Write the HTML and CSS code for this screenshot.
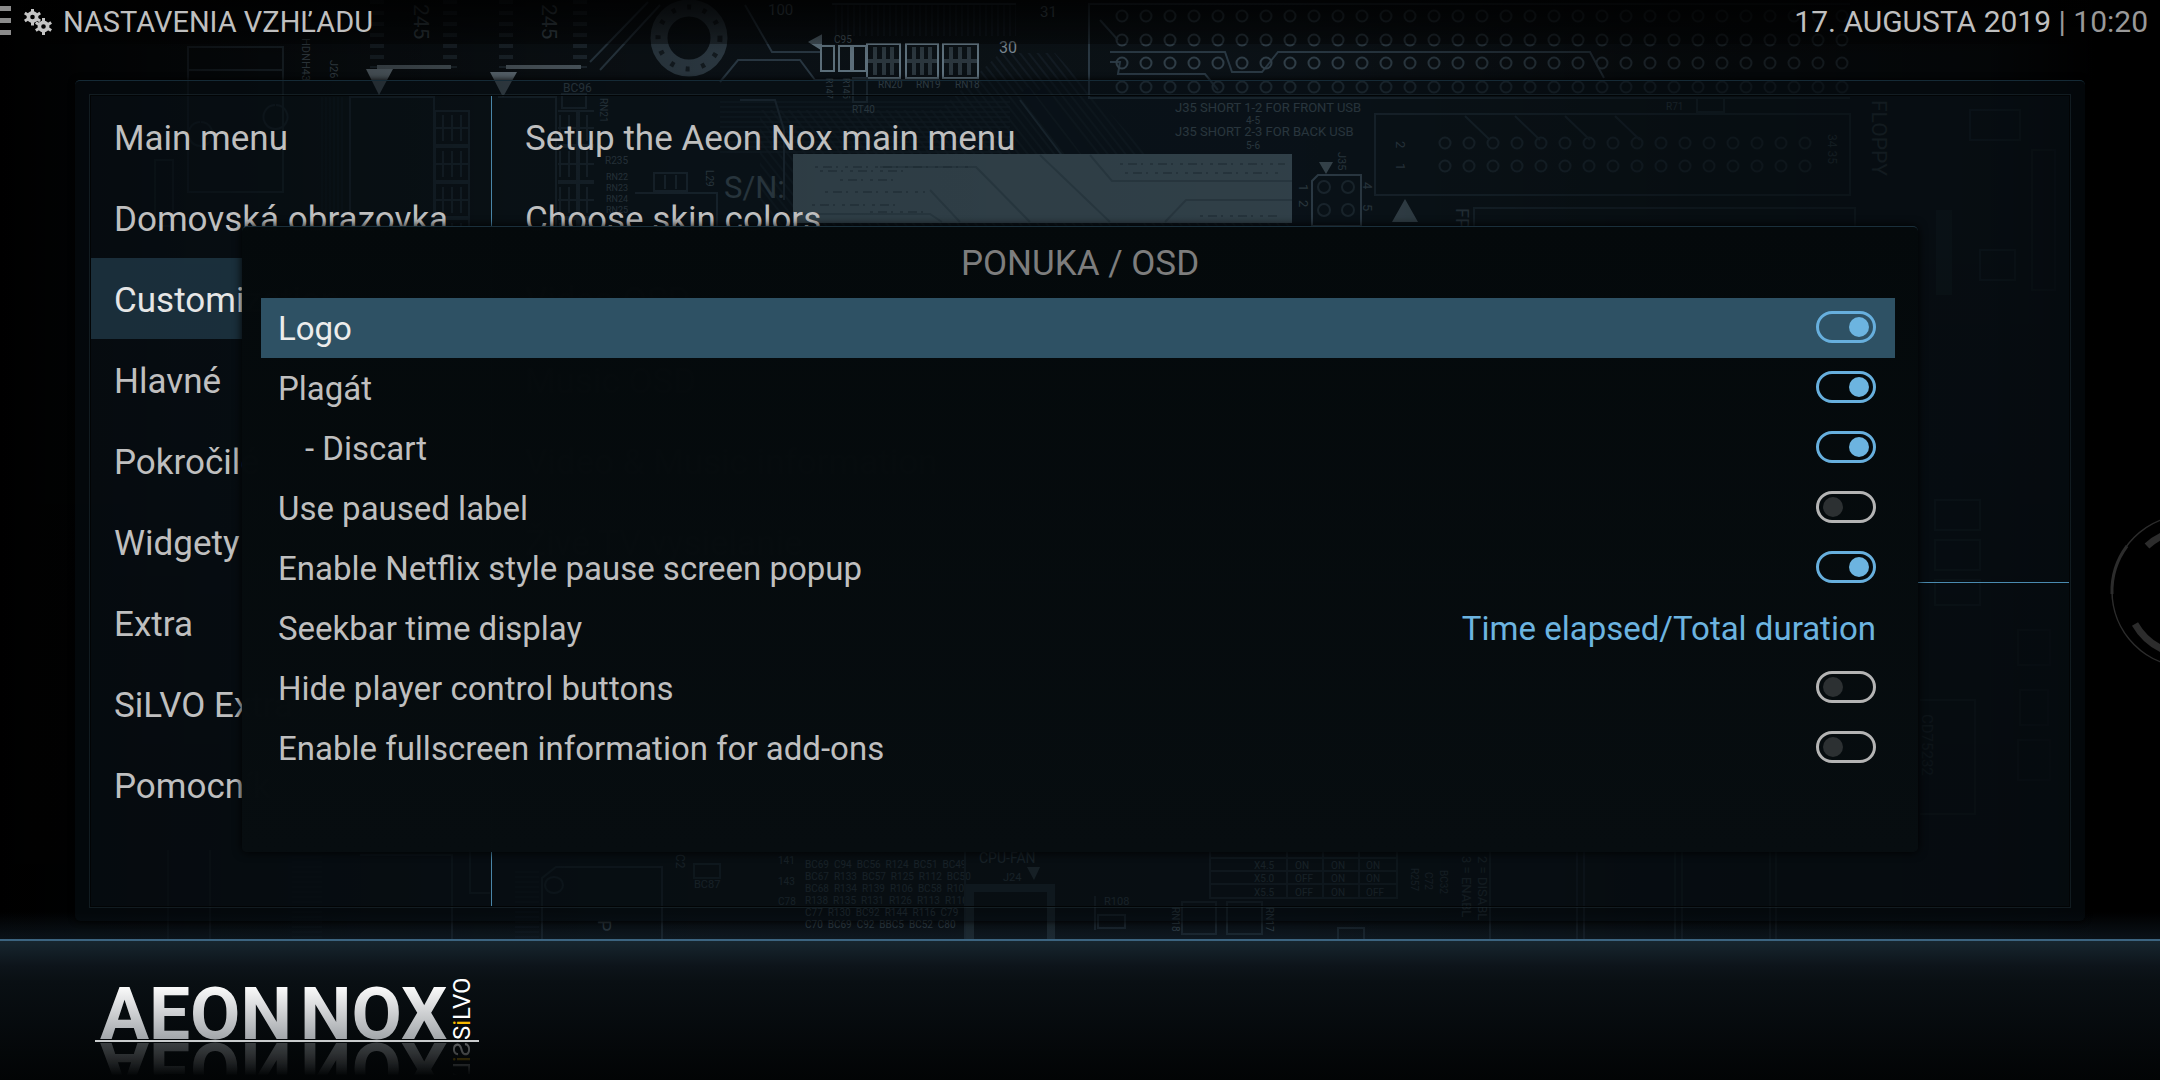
FILE: index.html
```html
<!DOCTYPE html>
<html lang="sk">
<head>
    <meta charset="UTF-8">
    <meta name="viewport" content="width=device-width, initial-scale=1.0">
    <title>Nastavenia vzhľadu</title>
    <link rel="stylesheet" href="styles.css">
</head>
<body>
    <!-- circuit board wallpaper -->
    <svg class="wallpaper" viewBox="0 0 2160 1080" preserveAspectRatio="xMidYMid slice" aria-hidden="true">
        <defs>
            <pattern id="holes" x="1110" y="4" width="24" height="47" patternUnits="userSpaceOnUse">
                <circle cx="12" cy="12" r="5.5" class="hole"/>
                <circle cx="12" cy="36" r="5.5" class="hole"/>
            </pattern>
            <pattern id="holes2" x="1433" y="131" width="24" height="23" patternUnits="userSpaceOnUse">
                <circle cx="12" cy="12" r="5.5" class="hole"/>
            </pattern>
            <pattern id="comb" width="6" height="10" patternUnits="userSpaceOnUse">
                <path d="M2 0V10" class="trace"/>
            </pattern>
            <pattern id="diag" width="7" height="7" patternUnits="userSpaceOnUse" patternTransform="rotate(-38)">
                <path d="M1 0V7" class="trace"/>
            </pattern>
            <pattern id="rows" width="8" height="5" patternUnits="userSpaceOnUse">
                <path d="M0 2H8" class="trace"/>
            </pattern>
            <pattern id="chip" width="36" height="36" patternUnits="userSpaceOnUse" x="434" y="110">
                <path d="M1 1H35V35H1ZM1 18H35M9 5V31M18 5V31M27 5V31" class="line"/>
            </pattern>
            <linearGradient id="shade-x">
                <stop offset="0" stop-color="#000" stop-opacity="1"/>
                <stop offset="0.04" stop-color="#000" stop-opacity="0.85"/>
                <stop offset="0.17" stop-color="#000" stop-opacity="0.45"/>
                <stop offset="0.33" stop-color="#000" stop-opacity="0.1"/>
                <stop offset="0.6" stop-color="#000" stop-opacity="0.05"/>
                <stop offset="0.78" stop-color="#000" stop-opacity="0.55"/>
                <stop offset="0.92" stop-color="#000" stop-opacity="0.7"/>
                <stop offset="0.97" stop-color="#000" stop-opacity="1"/>
            </linearGradient>
            <linearGradient id="shade-y" x2="0" y2="1">
                <stop offset="0" stop-color="#000" stop-opacity="0.4"/>
                <stop offset="0.05" stop-color="#000" stop-opacity="0.05"/>
                <stop offset="0.2" stop-color="#000" stop-opacity="0.05"/>
                <stop offset="0.8" stop-color="#000" stop-opacity="0.5"/>
            </linearGradient>
        </defs>
        <rect width="2160" height="1080" fill="#0c1318"/>
        <!-- copper traces -->
        <rect x="832" y="4" width="184" height="32" fill="url(#comb)"/>
        <path d="M832 4H1016" class="line"/>
        <path d="M940 110L1000 53H1055L1180 190H1292V226H760V110Z" fill="url(#diag)"/>
        <rect x="720" y="100" width="290" height="54" fill="url(#rows)"/>
        <path d="M1025 90L1125 226M1040 90L1140 226" stroke="#0a1019" stroke-width="9" fill="none"/>
        <path d="M720 82L738 60H800L815 80H940M745 5L772 52H820M1100 20L1118 40M1110 62H1120L1118 74H1205L1218 90M1110 52H1225L1232 72H1262L1278 52H1590L1604 78M1020 100L1085 186M600 70L660 5M590 62L648 2M740 100H775L784 130V200" class="line"/>
        <!-- chips top left -->
        <g class="board-text">
            <text transform="translate(414 4) rotate(90)" font-size="21">245</text>
            <text transform="translate(542 4) rotate(90)" font-size="21">245</text>
            <text transform="translate(302 38) rotate(90)" font-size="11">HDNH43</text>
            <text transform="translate(330 60) rotate(90)" font-size="11">J26</text>
            <text x="563" y="92" font-size="12">BC96</text>
            <text x="605" y="164" font-size="10">R235</text>
            <text x="606" y="180" font-size="9">RN22</text>
            <text x="606" y="191" font-size="9">RN23</text>
            <text x="606" y="202" font-size="9">RN24</text>
            <text x="606" y="213" font-size="9">RN25</text>
            <text transform="translate(600 98) rotate(90)" font-size="10">RN21</text>
            <text transform="translate(706 170) rotate(90)" font-size="10">L29</text>
            <text x="768" y="15" font-size="15">100</text>
            <text x="1040" y="17" font-size="15">31</text>
            <text x="834" y="43" font-size="10">C95</text>
            <text x="878" y="88" font-size="10">RN20</text>
            <text x="916" y="88" font-size="10">RN19</text>
            <text x="955" y="88" font-size="10">RN18</text>
            <text x="852" y="113" font-size="10">RT40</text>
            <text transform="translate(826 78) rotate(90)" font-size="9">R147</text>
            <text transform="translate(843 78) rotate(90)" font-size="9">R145</text>
            <text x="724" y="198" font-size="31">S/N:</text>
            <text x="1175" y="112" font-size="13">J35 SHORT 1-2 FOR FRONT USB</text>
            <text x="1246" y="124" font-size="10">4-5</text>
            <text x="1175" y="136" font-size="13">J35 SHORT 2-3 FOR BACK USB</text>
            <text x="1246" y="149" font-size="10">5-6</text>
            <text transform="translate(1338 152) rotate(90)" font-size="11">J35</text>
            <text transform="translate(1396 141) rotate(90)" font-size="13">2</text>
            <text transform="translate(1396 163) rotate(90)" font-size="13">1</text>
            <text transform="translate(1299 184) rotate(90)" font-size="13">1</text>
            <text transform="translate(1299 200) rotate(90)" font-size="13">2</text>
            <text transform="translate(1363 182) rotate(90)" font-size="13">4</text>
            <text transform="translate(1363 204) rotate(90)" font-size="13">5</text>
            <text transform="translate(1456 208) rotate(90)" font-size="18">FP</text>
            <text x="1666" y="110" font-size="10">R71</text>
            <text transform="translate(1828 134) rotate(90)" font-size="12">34 35</text>
            <text transform="translate(1872 100) rotate(90)" font-size="21">FLOPPY</text>
            <text transform="translate(1922 714) rotate(90)" font-size="15">CD75232</text>
        </g>
        <path d="M188 47H283V192H188ZM188 70H283M350 97H434V226H350ZM498 97H556V226" class="line"/>
        <path d="M322 97V226M326 97V226M330 97V226M334 97V226M338 97V226M342 97V226" class="trace"/>
        <path d="M377 0V68M450 0V68M506 0V68M580 0V68" class="pins"/>
        <path d="M377 67H451M506 67H581" stroke="#5e6c75" stroke-width="4"/>
        <path d="M366 69H393L379 95ZM490 72H517L503 97Z" fill="#7c8d98"/>
        <rect x="434" y="110" width="36" height="116" fill="url(#chip)"/>
        <rect x="558" y="110" width="36" height="116" fill="url(#chip)"/>
        <path d="M562 94H586V108H562ZM654 173H687V191H654ZM665 175V189M676 175V189M635 193H717V226" class="line"/>
        <path d="M155 160H173V226H155ZM200 122A12 12 0 1 0 201 122M275 105A12 12 0 1 0 276 105" class="line"/>
        <circle cx="689" cy="38" r="30" fill="none" stroke="#303e48" stroke-width="17"/>
        <circle cx="689" cy="38" r="31" fill="none" stroke="#151d23" stroke-width="5" stroke-dasharray="4 12"/>
        <!-- resistor packs -->
        <g class="bright">
            <path d="M867 44H900V78H867ZM906 44H938V78H906ZM943 44H978V78H943ZM821 46H834V71H821ZM839 46H851V71H839ZM853 46H866V71H853Z"/>
            <path d="M867 61H900M875 47V75M884 47V75M892 47V75M906 61H938M914 47V75M922 47V75M930 47V75M943 61H978M951 47V75M960 47V75M969 47V75" stroke-width="4" opacity="0.4"/>
            <path d="M810 42L821 36V49Z" fill="#6a7f8c"/>
            <text x="999" y="53" font-size="16">30</text>
        </g>
        <path d="M853 78H867V102H853Z" class="line"/>
        <!-- long connector -->
        <path d="M1850 4H1089V98H1850" class="line"/>
        <rect x="1110" y="4" width="740" height="94" fill="url(#holes)"/>
        <!-- serial number label -->
        <rect x="793" y="154" width="499" height="69" fill="#6f8894"/>
        <path d="M880 167H976L1030 222M930 190L960 222M1040 155L1110 222M1090 155L1112 181H1292M1165 222L1186 200H1292M793 214H930L942 222" stroke="#57707c" stroke-width="2" fill="none"/>
        <path d="M815 167H970M820 171H910M1120 164H1285M1125 173H1280M1200 216H1280M825 192H925M812 205H900M870 212H930M840 180H900" stroke="#3a4d57" stroke-dasharray="3 5 9 4 2 7"/>
        <path d="M1318 175H1361V226H1312V181Z" class="line bright-line"/>
        <circle cx="1324" cy="187" r="6" class="hole"/><circle cx="1348" cy="187" r="6" class="hole"/>
        <circle cx="1324" cy="210" r="6" class="hole"/><circle cx="1348" cy="210" r="6" class="hole"/>
        <path d="M1319 162H1333L1326 174ZM1405 199L1418 222H1392Z" fill="#7c909b"/>
        <path d="M1375 195V114H1850V195ZM1474 226V208H1855V226M1697 98H1724V112H1697Z" class="line"/>
        <rect x="1433" y="131" width="384" height="46" fill="url(#holes2)"/>
        <path d="M1465 116L1490 140M1515 116L1540 140M1565 116L1590 140M1615 116L1640 140" class="line"/>
        <!-- right side -->
        <path d="M1970 110H2020V140H1970ZM1980 250H2015V280H1980ZM2032 150H2055V290H2032ZM1935 500H1980V530H1935ZM1935 540H1980V570H1935ZM1935 580H1980V605H1935ZM2018 630H2050V665H2018ZM2020 690H2048V725H2020ZM2018 740H2050V780H2018ZM1920 700H1975V814H1920" class="line"/>
        <path d="M1944 210V295" stroke="#26323a" stroke-width="16"/>
        <!-- lower strip -->
        <g class="board-text">
            <text x="805" y="868" font-size="10">BC69&#160; C94&#160; BC56&#160; R124&#160; BC51&#160; BC49</text>
            <text x="805" y="880" font-size="10">BC67&#160; R133&#160; BC57&#160; R125&#160; R112&#160; BC50</text>
            <text x="805" y="892" font-size="10">BC68&#160; R134&#160; R139&#160; R106&#160; BC58&#160; R109</text>
            <text x="805" y="904" font-size="10">R138&#160; R135&#160; R131&#160; R126&#160; R113&#160; R110</text>
            <text x="805" y="916" font-size="10">C77&#160; R130&#160; BC92&#160; R144&#160; R116&#160; C79</text>
            <text x="805" y="928" font-size="10">C70&#160; BC69&#160; C92&#160; BBC5&#160; BC52&#160; C80</text>
            <text x="778" y="864" font-size="10">141</text>
            <text x="778" y="885" font-size="10">143</text>
            <text x="778" y="905" font-size="10">C78</text>
            <text x="979" y="863" font-size="14">CPU-FAN</text>
            <text x="1003" y="881" font-size="11">J24</text>
            <text x="1104" y="905" font-size="11">R108</text>
            <text x="1254" y="869" font-size="10">X4.5</text>
            <text x="1254" y="882" font-size="10">X5.0</text>
            <text x="1254" y="896" font-size="10">X5.5</text>
            <text x="1295" y="869" font-size="10">ON</text>
            <text x="1295" y="882" font-size="10">OFF</text>
            <text x="1295" y="896" font-size="10">OFF</text>
            <text x="1331" y="869" font-size="10">ON</text>
            <text x="1331" y="882" font-size="10">ON</text>
            <text x="1331" y="896" font-size="10">ON</text>
            <text x="1366" y="869" font-size="10">ON</text>
            <text x="1366" y="882" font-size="10">ON</text>
            <text x="1366" y="896" font-size="10">OFF</text>
            <text transform="translate(1411 868) rotate(90)" font-size="10">R257</text>
            <text transform="translate(1425 872) rotate(90)" font-size="10">C72</text>
            <text transform="translate(1440 870) rotate(90)" font-size="10">BC32</text>
            <text transform="translate(1478 856) rotate(90)" font-size="13">2 = DISABL</text>
            <text transform="translate(1462 856) rotate(90)" font-size="13">3 = ENABL</text>
            <text transform="translate(1172 907) rotate(90)" font-size="10">RN18</text>
            <text transform="translate(1266 907) rotate(90)" font-size="10">RN17</text>
            <text transform="translate(676 854) rotate(90)" font-size="12">C2</text>
            <text x="694" y="888" font-size="11">BC87</text>
            <text transform="translate(598 920) rotate(90)" font-size="18">P</text>
        </g>
        <path d="M970 939V888H1051V939" stroke="#33444e" stroke-width="8" fill="none"/>
        <path d="M1027 867H1040L1034 880Z" fill="#566a76"/>
        <path d="M1210 852V898H1397V852M1210 858H1397M1210 871H1397M1210 884H1397M1287 852V898M1323 852V898M1359 852V898M1182 902H1216V934H1182ZM1227 902H1262V934H1227ZM1095 896V930M1098 915H1125V928H1098ZM1338 939V928H1364V939M1490 852V939M1577 852V939M1584 852V939M1675 852V939M1682 852V939M1770 852V939M1776 852V939" class="line"/>
        <path d="M542 939V878L556 867H662V939M360 855H452V939M168 850V939M210 850V939M470 850V893H490M694 864H720V878H694ZM965 852V939" class="line"/>
        <ellipse cx="554" cy="885" rx="9" ry="8" class="line"/>
        <rect x="292" y="852" width="30" height="87" fill="url(#rows)"/>
        <rect x="515" y="868" width="24" height="71" fill="url(#rows)"/>
        <rect width="2160" height="1080" fill="url(#shade-x)"/>
        <rect width="2160" height="1080" fill="url(#shade-y)"/>
        <!-- loader ring at the edge -->
        <g fill="none" stroke="#2c2c2c">
            <circle cx="2188" cy="591" r="76" stroke-width="1.5"/>
            <path d="M2112 594A76 76 0 0 1 2127 546" stroke-width="3"/>
            <path d="M2147 546A60 60 0 0 1 2164 535M2135 624A62 62 0 0 0 2164 650" stroke-width="7"/>
        </g>
    </svg>

    <header class="topbar">
        <button type="button" class="menu-btn" aria-label="Menu"><span></span><span></span><span></span></button>
        <svg class="gears" viewBox="0 0 30 26" aria-hidden="true">
            <g fill="none" stroke="#c4c4c4">
                <circle cx="9.5" cy="8" r="4.1" stroke-width="3.6"/>
                <path d="M9.5 -0.5V3M9.5 13V16.5M1.8 4L5 6M14 10L17.2 12M17.2 4L14 6M5 10L1.8 12" stroke-width="3"/>
                <circle cx="20.5" cy="17.5" r="4.1" stroke-width="3.6"/>
                <path d="M20.5 9V12.500M20.5 22.500V26M12.800 13.500L16 15.500M25 19.500L28.200 21.500M28.200 13.500L25 15.500M16 19.500L12.800 21.500" stroke-width="3"/>
            </g>
        </svg>
        <h1 class="topbar-title">NASTAVENIA VZHĽADU</h1>
        <div class="topbar-date">17. AUGUSTA 2019 <span class="clock">| 10:20</span></div>
    </header>

    <main class="content">
        <div class="panel">
            <div class="panel-inner">
                <nav class="categories">
                    <a href="#">Main menu</a>
                    <a href="#">Domovská obrazovka</a>
                    <a href="#" class="active">Customization</a>
                    <a href="#">Hlavné</a>
                    <a href="#">Pokročilé</a>
                    <a href="#">Widgety</a>
                    <a href="#">Extra</a>
                    <a href="#">SiLVO Extra</a>
                    <a href="#">Pomocník</a>
                </nav>
                <div class="options">
                    <a href="#">Setup the Aeon Nox main menu</a>
                    <a href="#">Choose skin colors</a>
                    <a href="#">Video OSD</a>
                    <a href="#">Music OSD</a>
                    <a href="#">Video &amp; Music information</a>
                    <a href="#">Živé TV vysielanie</a>
                </div>
            </div>
        </div>
    </main>

    <section class="dialog" role="dialog" aria-labelledby="dialog-title">
        <h2 class="dialog-title" id="dialog-title">PONUKA / OSD</h2>
        <div class="setting focused">
            <label for="logo">Logo</label>
            <input type="checkbox" class="toggle" id="logo" checked>
        </div>
        <div class="setting">
            <label for="poster">Plagát</label>
            <input type="checkbox" class="toggle" id="poster" checked>
        </div>
        <div class="setting sub">
            <label for="discart">- Discart</label>
            <input type="checkbox" class="toggle" id="discart" checked>
        </div>
        <div class="setting">
            <label for="paused">Use paused label</label>
            <input type="checkbox" class="toggle" id="paused">
        </div>
        <div class="setting">
            <label for="netflix">Enable Netflix style pause screen popup</label>
            <input type="checkbox" class="toggle" id="netflix" checked>
        </div>
        <div class="setting">
            <label for="seekbar">Seekbar time display</label>
            <button type="button" class="value" id="seekbar">Time elapsed/Total duration</button>
        </div>
        <div class="setting">
            <label for="hide-buttons">Hide player control buttons</label>
            <input type="checkbox" class="toggle" id="hide-buttons">
        </div>
        <div class="setting">
            <label for="fullscreen-info">Enable fullscreen information for add-ons</label>
            <input type="checkbox" class="toggle" id="fullscreen-info">
        </div>
    </section>

    <footer class="bottombar">
        <svg class="logo" viewBox="0 0 400 110" role="img" aria-label="Aeon Nox SiLVO">
            <defs>
                <linearGradient id="metal" x1="0" y1="14" x2="0" y2="69" gradientUnits="userSpaceOnUse">
                    <stop offset="0" stop-color="#ffffff"/>
                    <stop offset="1" stop-color="#a2a6aa"/>
                </linearGradient>
                <linearGradient id="fade" x1="0" y1="72" x2="0" y2="106" gradientUnits="userSpaceOnUse">
                    <stop offset="0" stop-color="#fff" stop-opacity="0.36"/>
                    <stop offset="1" stop-color="#fff" stop-opacity="0"/>
                </linearGradient>
                <mask id="mirror" maskUnits="userSpaceOnUse" x="0" y="72" width="400" height="38">
                    <rect x="0" y="72" width="400" height="38" fill="url(#fade)"/>
                </mask>
                <g id="wordmark">
                    <text class="logo-name" x="10" y="69">AEON</text>
                    <text class="logo-name" x="210" y="69">NOX</text>
                    <text class="logo-sub" transform="translate(380 70) rotate(-90)">S<tspan fill="#f5b800">i</tspan>LVO</text>
                </g>
            </defs>
            <use href="#wordmark"/>
            <path d="M5 71H389" stroke="#c9cccd" stroke-width="2"/>
            <g mask="url(#mirror)">
                <use href="#wordmark" transform="translate(0 142) scale(1 -1)"/>
            </g>
        </svg>
    </footer>
</body>
</html>
```
FILE: styles.css
```css
* {
    box-sizing: border-box;
}

body {
    margin: 0;
    min-height: 100vh;
    display: flex;
    flex-direction: column;
    position: relative;
    overflow: hidden;
    background-color: #000;
    color: #bfbfbf;
    font-family: Roboto, "Noto Sans", sans-serif;
    font-size: 33px;
    line-height: 40px;
}

a {
    color: inherit;
    text-decoration: none;
}

/* wallpaper */
.wallpaper {
    position: absolute;
    top: 0;
    left: 0;
    width: 100%;
    height: 100%;
    z-index: -1;
}

.trace {
    fill: none;
    stroke: #1b2833;
    stroke-width: 1;
}

.line {
    fill: none;
    stroke: #2e3e4a;
    stroke-width: 2;
}

.bright-line {
    stroke: #63798a;
}

.hole {
    fill: none;
    stroke: #34444f;
    stroke-width: 2;
}

.pins {
    fill: none;
    stroke: #222e37;
    stroke-width: 14;
    stroke-dasharray: 4 7;
}

.bright {
    fill: none;
    stroke: #6a7f8c;
    stroke-width: 2;
}

.bright text {
    fill: #8a9aa5;
    stroke: none;
}

.board-text {
    fill: #5d707c;
}

/* top bar */
.topbar {
    display: flex;
    align-items: center;
    height: 44px;
    padding-right: 12px;
    background: linear-gradient(rgba(0, 0, 0, 0.75), rgba(0, 0, 0, 0.35));
    font-size: 30px;
}

.menu-btn {
    display: flex;
    flex-direction: column;
    gap: 7px;
    margin: 0 12px 4px 0;
    padding: 0;
    border: 0;
    background: none;
}

.menu-btn span {
    width: 11px;
    height: 5px;
    background-color: #8c8c8c;
}

.gears {
    width: 30px;
    height: 26px;
    margin-right: 10px;
}

.topbar-title {
    margin: 0;
    font-size: 29px;
    font-weight: 400;
}

.topbar-date {
    margin-left: auto;
}

.clock {
    color: #999;
}

/* settings window */
.content {
    flex: 1;
    display: flex;
    padding: 36px 75px 18px;
    background: linear-gradient(transparent 97%, rgba(40, 70, 95, 0.25));
}

.panel {
    flex: 1;
    display: flex;
    padding: 15px 16px;
    border-top: 1px solid #152a36;
    border-radius: 5px;
    background-color: rgba(5, 14, 19, 0.5);
    box-shadow: 0 0 6px #000;
}

.panel-inner {
    flex: 1;
    display: flex;
    outline: 1px solid #020405;
    box-shadow: 0 0 0 2px rgba(45, 65, 75, 0.35);
    background-color: rgba(22, 35, 43, 0.14);
}

.categories {
    width: 401px;
    border-right: 1px solid #4a86a8;
}

.categories a,
.options a {
    display: flex;
    align-items: center;
    height: 81px;
    padding: 5px 23px 0;
    font-size: 35px;
    white-space: nowrap;
}

.categories a.active {
    color: #e6e6e6;
    background-color: rgba(50, 88, 110, 0.45);
}

.options {
    flex: 1;
}

.options a {
    padding-left: 33px;
}

.options a:last-child {
    border-bottom: 1px solid #4a8bb0;
    height: 82px;
}

/* dialog */
.dialog {
    position: absolute;
    top: 226px;
    left: 242px;
    right: 242px;
    padding: 0 23px 74px 19px;
    border-top: 1px solid #1a2f3b;
    border-radius: 5px;
    background: linear-gradient(rgba(4, 9, 11, 0.995), rgba(7, 13, 16, 0.995));
    box-shadow: 0 0 10px #000;
}

.dialog-title {
    display: flex;
    align-items: center;
    justify-content: center;
    height: 71px;
    margin: 0;
    padding: 3px 0 0 4px;
    color: #7d7d7d;
    font-size: 35px;
    font-weight: 400;
}

.setting {
    display: flex;
    align-items: center;
    justify-content: space-between;
    height: 60px;
    padding: 2px 19px 0 17px;
}

.setting.sub {
    padding-left: 44px;
}

.setting.focused {
    color: #ececec;
    background-color: #2e5164;
}

.toggle {
    appearance: none;
    display: flex;
    align-items: center;
    width: 60px;
    height: 32px;
    margin: 0 0 4px;
    padding: 0 4px;
    border: 3px solid #b4b4b4;
    border-radius: 16px;
}

.toggle::before {
    content: "";
    width: 20px;
    height: 20px;
    border-radius: 50%;
    background-color: #2c3032;
}

.toggle:checked {
    justify-content: flex-end;
    border-color: #67afdd;
}

.toggle:checked::before {
    background-color: #6cb4e0;
}

.value {
    padding: 0;
    border: 0;
    background: none;
    color: #6cb4e0;
    font: inherit;
}

/* bottom bar */
.bottombar {
    height: 141px;
    padding: 29px 90px 0;
    border-top: 2px solid #3c6480;
    background: linear-gradient(#17262f, #0d141a 18%, #090f13 30%, #020405);
}

.logo {
    display: block;
    width: 400px;
    height: 110px;
}

.logo-name {
    fill: url(#metal);
    font-size: 73px;
    font-weight: 700;
}

.logo-sub {
    fill: #fff;
    font-size: 24px;
}
```
